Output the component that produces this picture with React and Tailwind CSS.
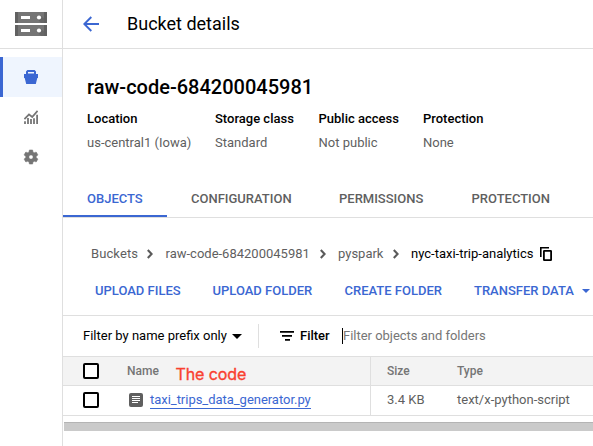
const details = [
  { label: 'Location', value: 'us-central1 (Iowa)', width: 'w-[128px]' },
  { label: 'Storage class', value: 'Standard', width: 'w-[103.5px]' },
  { label: 'Public access', value: 'Not public', width: 'w-[104.5px]' },
  { label: 'Protection', value: 'None', width: 'w-[100px]' },
];

const tabs = [
  { label: 'OBJECTS', width: 'w-[104px]', active: true },
  { label: 'CONFIGURATION', width: 'w-[148px]' },
  { label: 'PERMISSIONS', width: 'w-[132.5px]' },
  { label: 'PROTECTION', width: 'w-[126px]' },
];

function StorageLogo() {
  return (
    <svg width="32" height="24" viewBox="0 0 32 24" className="block">
      {[0, 13].map((y) => (
        <g key={y}>
          <rect y={y} width="32" height="11" fill="#757575" />
          <rect y={y} width="3" height="11" fill="#616161" />
          <path d={`M29 ${y}h3v11h-3z`} fill="#616161" />
          <path d={`M22.5 ${y + 7}l3-3.5 3.5 3v4.5h-3z`} fill="#666" />
          <rect x="6" y={y + 4} width="9" height="3" fill="#fff" />
          <circle cx="24" cy={y + 5.5} r="2.1" fill="#fff" />
        </g>
      ))}
    </svg>
  );
}

function BasketIcon() {
  return (
    <svg width="14" height="14" viewBox="0 0 14 14" fill="#3b67d2" className="block">
      <path fillRule="evenodd" d="M3.4 0h7.2L12 1.4V4h2v4h-.7l-1.5 6H2.2L.7 8H0V4h2V1.4zM4 2v1.6h6V2z" />
    </svg>
  );
}

function ChartIcon() {
  return (
    <svg width="14" height="14" viewBox="0 0 14 14" fill="none" stroke="#757575" className="block">
      <path d="M.4 9.2 5 4.4l3.2 2.6L13.6.8" strokeWidth="1.8" />
      <path d="M1 14v-2.7M4 14V8M7 14V9M10 14V8.2M13.1 14V4.7" strokeWidth="1.8" />
    </svg>
  );
}

function GearIcon() {
  return (
    <svg width="14" height="14" viewBox="2 2 20 20" fill="#757575" stroke="#757575" strokeWidth=".8" className="block overflow-visible">
      <path d="M19.43 12.98c.04-.32.07-.64.07-.98s-.03-.66-.07-.98l2.11-1.65c.19-.15.24-.42.12-.64l-2-3.46c-.12-.22-.39-.3-.61-.22l-2.49 1c-.52-.4-1.08-.73-1.69-.98l-.38-2.65C14.46 2.18 14.25 2 14 2h-4c-.25 0-.46.18-.49.42l-.38 2.65c-.61.25-1.17.59-1.69.98l-2.49-1c-.23-.09-.49 0-.61.22l-2 3.46c-.13.22-.07.49.12.64l2.11 1.65c-.04.32-.07.65-.07.98s.03.66.07.98l-2.11 1.65c-.19.15-.24.42-.12.64l2 3.46c.12.22.39.3.61.22l2.49-1c.52.4 1.08.73 1.69.98l.38 2.65c.03.24.24.42.49.42h4c.25 0 .46-.18.49-.42l.38-2.65c.61-.25 1.17-.59 1.69-.98l2.49 1c.23.09.49 0 .61-.22l2-3.46c.12-.22.07-.49-.12-.64l-2.11-1.65zM12 15c-1.65 0-3-1.35-3-3s1.35-3 3-3 3 1.35 3 3-1.35 3-3 3z" />
    </svg>
  );
}

function Chevron() {
  return (
    <svg width="6" height="10" viewBox="0 0 6 10" fill="none" stroke="#5a5a5a" strokeWidth="2.1" className="block shrink-0">
      <path d="M.8 1 4.6 5 .8 9" />
    </svg>
  );
}

function CopyIcon() {
  return (
    <svg width="12" height="14" viewBox="0 0 12 14" fill="none" stroke="#000" className="block shrink-0">
      <path d="M.8 10V.8H9" strokeWidth="1.6" />
      <rect x="3.9" y="3.9" width="7.2" height="9.2" rx=".4" strokeWidth="1.8" />
    </svg>
  );
}

function Checkbox() {
  return <div className="size-4 shrink-0 rounded-[2px] border-2 border-black bg-white" />;
}

export default function App() {
  return (
    <div className="flex h-[446px] w-[593px] overflow-hidden whitespace-nowrap bg-white font-[Roboto,sans-serif] text-[13px] leading-4 text-black">
      <aside className="flex w-[63px] shrink-0 flex-col border-r border-[#dfdfdf]">
        <div className="flex h-[49px] justify-center border-b border-[#dfdfdf] pt-3">
          <StorageLogo />
        </div>
        <nav className="flex flex-col pt-2">
          <div className="flex h-10 items-center justify-center border-l-[3px] border-[#3b67d2] bg-[#eff5fe] pr-[3px]">
            <BasketIcon />
          </div>
          <div className="flex h-10 items-center justify-center">
            <ChartIcon />
          </div>
          <div className="flex h-10 items-center justify-center">
            <GearIcon />
          </div>
        </nav>
      </aside>

      <main className="flex w-[530px] flex-col">
        <header className="flex h-[49px] items-center border-b border-[#dfdfdf] pl-5">
          <svg width="16" height="16" viewBox="0 0 16 16" fill="none" stroke="#3b67d2" strokeWidth="1.9" className="block">
            <path d="M16 8H1.5M8.3 1 1.3 8l7 7" />
          </svg>
          <h1 className="ml-7 text-[18px] leading-6">Bucket details</h1>
        </header>

        <section className="h-[131px] pl-6 pt-[26px]">
          <h2 className="text-[20px] font-medium leading-6">raw-code-684200045981</h2>
          <div className="mt-3 flex">
            {details.map((d) => (
              <div key={d.label} className={d.width}>
                <div className="font-medium">{d.label}</div>
                <div className="mt-2 text-[#5f5f5f]">{d.value}</div>
              </div>
            ))}
          </div>
        </section>

        <div className="flex h-[38px] border-b border-[#dfdfdf]">
          {tabs.map((t) => (
            <div
              key={t.label}
              className={`${t.width} -mb-px h-[37px] pl-6 pt-[11px] font-medium ${t.active ? 'border-b-2 border-[#3b67d2] text-[#3b67d2]' : 'text-[#5f5f5f]'}`}
            >
              {t.label}
            </div>
          ))}
        </div>

        <div className="mt-7 flex h-4 items-center pl-7 text-[#5f5f5f]">
          <span className="w-[56px] tracking-[0.1px]">Buckets</span>
          <Chevron />
          <span className="ml-[12.5px] w-[154.5px]">raw-code-684200045981</span>
          <Chevron />
          <span className="ml-[12px] w-[55px]">pyspark</span>
          <Chevron />
          <span className="ml-[12px] w-[129px] text-black">nyc-taxi-trip-analytics</span>
          <CopyIcon />
        </div>

        <div className="mt-[21px] flex h-4 items-center pl-8 font-medium text-[#3b67d2]">
          <span className="w-[117.5px]">UPLOAD FILES</span>
          <span className="w-[132px]">UPLOAD FOLDER</span>
          <span className="w-[129.5px]">CREATE FOLDER</span>
          <span className="w-[108px]">TRANSFER DATA</span>
          <svg width="8" height="4" viewBox="0 0 8 4" fill="#3b67d2" className="block"><path d="M0 0h8L4 4z" /></svg>
        </div>

        <div className="mt-4 flex h-[42px] items-center border-y border-[#dfdfdf] pl-5">
          <span className="w-[149px]">Filter by name prefix only</span>
          <svg width="10" height="5" viewBox="0 0 10 5" className="block"><path d="M0 0h10L5 5z" /></svg>
          <div className="ml-4 h-6 w-px bg-[#dfdfdf]" />
          <svg width="14" height="10" viewBox="0 0 14 10" className="ml-[21px] block"><path d="M0 0h14v1.7H0zM2 4h10v1.7H2zM5 8h5v1.7H5z" /></svg>
          <span className="ml-[6px] w-[42px] font-medium">Filter</span>
          <div className="h-4 w-px bg-black" />
          <span className="tracking-[-0.02px] text-[#767676]">Filter objects and folders</span>
        </div>

        <div className="flex h-[29px] border-b border-[#dfdfdf] bg-[#f3f3f3] text-xs font-medium text-[#757575]">
          <div className="flex w-[308px] items-center border-r border-[#dfdfdf] pl-5">
            <Checkbox />
            <span className="ml-7 w-[48.5px]">Name</span>
            <span className="pt-[5px] font-[Inter,sans-serif] text-[16px] font-normal leading-5 tracking-[-0.1px] text-[#f9402f] [-webkit-text-stroke:0.35px_#f9402f]">The code</span>
          </div>
          <span className="w-[86px] pl-4 pt-[6px]">Size</span>
          <span className="pt-[6px]">Type</span>
        </div>
        <div className="flex h-[30px] border-b border-[#dfdfdf] text-[#5f5f5f]">
          <div className="flex w-[308px] items-center border-r border-[#dfdfdf] pb-px pl-5">
            <Checkbox />
            <svg width="14" height="14" viewBox="0 0 14 14" className="ml-[30px] block">
              <rect width="14" height="14" rx="2" fill="#5f5f5f" />
              <path d="M3 3h8v1H3zM3 5h8v1H3zM3 7h8v1H3zM3 9h6v1H3z" fill="#fff" />
            </svg>
            <a className="ml-[7px] h-[17px] border-b border-[#3b67d2] tracking-[-0.03px] text-[#3b67d2]">taxi_trips_data_generator.py</a>
          </div>
          <span className="w-[86px] pl-4 pt-[6px]">3.4 KB</span>
          <span className="pt-[6px]">text/x-python-script</span>
        </div>
        <div className="ml-px mt-[6px] h-[9px] border-t border-[#b4b4b4] bg-[#cacaca]" />
      </main>
    </div>
  );
}
